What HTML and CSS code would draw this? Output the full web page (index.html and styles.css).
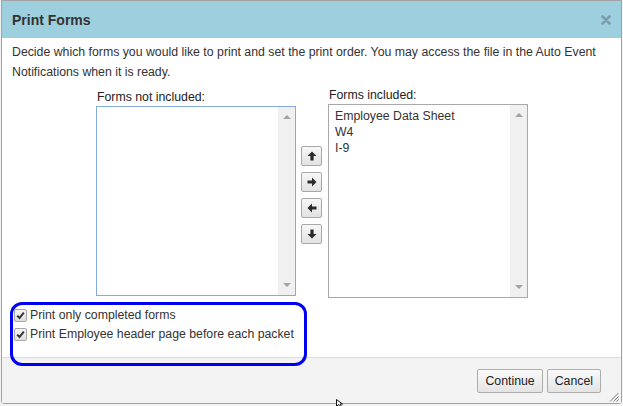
FILE: index.html
```html
<!DOCTYPE html>
<html>
<head>
<meta charset="utf-8">
<link rel="stylesheet" href="styles.css">
</head>
<body>
<div class="dialog">
  <div class="titlebar">
    <span class="title">Print Forms</span>
    <svg class="close" width="10" height="10" viewBox="0 0 10 10"><path d="M1.5 1.5 L8.5 8.5 M8.5 1.5 L1.5 8.5" stroke="#7a9cab" stroke-width="2.6" stroke-linecap="round"/></svg>
  </div>
  <div class="content">
    <p class="desc">Decide which forms you would like to print and set the print order. You may access the file in the Auto Event Notifications when it is ready.</p>
    <div class="lists">
      <div class="col col-left">
        <div class="label">Forms not included:</div>
        <div class="listbox focused">
          <div class="items"></div>
          <div class="scroll">
            <span class="tri up"></span>
            <span class="tri down"></span>
          </div>
        </div>
      </div>
      <div class="arrows">
        <button class="abtn"><svg width="10" height="10" viewBox="0 0 10 10"><path d="M5 0.5 L9.5 5 H6.6 V9.5 H3.4 V5 H0.5 Z" fill="#2b2b2b"/></svg></button>
        <button class="abtn"><svg width="10" height="10" viewBox="0 0 10 10"><path d="M9.5 5 L5 0.5 V3.4 H0.5 V6.6 H5 V9.5 Z" fill="#2b2b2b"/></svg></button>
        <button class="abtn"><svg width="10" height="10" viewBox="0 0 10 10"><path d="M0.5 5 L5 0.5 V3.4 H9.5 V6.6 H5 V9.5 Z" fill="#2b2b2b"/></svg></button>
        <button class="abtn"><svg width="10" height="10" viewBox="0 0 10 10"><path d="M5 9.5 L9.5 5 H6.6 V0.5 H3.4 V5 H0.5 Z" fill="#2b2b2b"/></svg></button>
      </div>
      <div class="col col-right">
        <div class="label">Forms included:</div>
        <div class="listbox tall">
          <div class="items">
            <div class="item">Employee Data Sheet</div>
            <div class="item">W4</div>
            <div class="item">I-9</div>
          </div>
          <div class="scroll">
            <span class="tri up"></span>
            <span class="tri down"></span>
          </div>
        </div>
      </div>
    </div>
    <div class="options">
      <label class="opt"><span class="cb"><svg width="9" height="9" viewBox="0 0 9 9"><path d="M1.2 4.6 L3.5 7 L7.8 1.6" fill="none" stroke="#333" stroke-width="2"/></svg></span>Print only completed forms</label>
      <label class="opt"><span class="cb"><svg width="9" height="9" viewBox="0 0 9 9"><path d="M1.2 4.6 L3.5 7 L7.8 1.6" fill="none" stroke="#333" stroke-width="2"/></svg></span>Print Employee header page before each packet</label>
    </div>
  </div>
  <div class="footer">
    <button class="btn">Continue</button>
    <button class="btn">Cancel</button>
    <svg class="grip" width="10" height="10" viewBox="0 0 10 10"><path d="M9.5 1 L1 9.5 M9.5 4.5 L4.5 9.5 M9.5 7.5 L7.5 9.5" stroke="#777" stroke-width="1"/></svg>
  </div>
</div>
<div class="annotation"></div>
<svg class="cursor" width="10" height="8" viewBox="0 0 10 8"><path d="M0.5 0.5 V7.5 L2.5 5.5 L4 7.5 H5.5 L4 5 H6.5 Z" fill="#fff" stroke="#111" stroke-width="1"/></svg>
</body>
</html>
```

FILE: styles.css
```css
html, body {
  margin: 0;
  padding: 0;
}
body {
  position: relative;
  width: 623px;
  height: 406px;
  overflow: hidden;
  background: #f2f2f2;
  font-family: Arial, "Liberation Sans", sans-serif;
  font-size: 12.3px;
  color: #333;
}
.dialog {
  margin-left: 1px;
  width: 621px;
  height: 404px;
  box-sizing: border-box;
  border: 1px solid #a3a3a3;
  border-radius: 0 0 3px 3px;
  background: #fff;
  display: flex;
  flex-direction: column;
}
.titlebar {
  height: 37px;
  flex: none;
  background: #9ecfdf;
  display: flex;
  align-items: center;
  justify-content: space-between;
  padding: 0 10px 0 10px;
}
.title {
  font-weight: bold;
  font-size: 14px;
  color: #333;
}
.close {
  display: block;
  margin-top: 1px;
}
.content {
  flex: 1;
  padding: 4px 10px 0 10px;
}
.desc {
  margin: 0;
  line-height: 20px;
  color: #333;
}
.lists {
  display: flex;
  align-items: flex-start;
  margin-left: 84px;
}
.col-left {
  margin-top: 8px;
}
.col-right {
  margin-top: 6px;
  margin-left: 6px;
}
.label {
  height: 16px;
  line-height: 15px;
  padding-left: 1px;
  color: #222;
}
.listbox {
  width: 200px;
  height: 190px;
  box-sizing: border-box;
  border: 1px solid #a9a9a9;
  display: flex;
  background: #fff;
}
.listbox.focused {
  border-color: #86a9e0;
}
.listbox.tall {
  height: 194px;
}
.items {
  flex: 1;
  padding: 3px 6px;
}
.item {
  line-height: 16px;
  color: #333;
}
.scroll {
  width: 17px;
  background: #f0f0f0;
  display: flex;
  flex-direction: column;
  justify-content: space-between;
  align-items: center;
  padding: 8px 0 8px 0;
}
.tri {
  width: 0;
  height: 0;
  border-left: 4px solid transparent;
  border-right: 4px solid transparent;
}
.tri.up {
  border-bottom: 4px solid #a3a3a3;
}
.tri.down {
  border-top: 4px solid #a3a3a3;
}
.arrows {
  display: flex;
  flex-direction: column;
  gap: 6px;
  margin-top: 64px;
  margin-left: 5px;
}
.abtn {
  width: 21px;
  height: 20px;
  padding: 0;
  box-sizing: border-box;
  border: 1px solid #a8a8a8;
  border-radius: 2px;
  background: linear-gradient(#f7f7f7, #e2e2e2);
  display: flex;
  align-items: center;
  justify-content: center;
}
.abtn svg {
  display: block;
}
.options {
  margin-top: 8px;
  margin-left: 2px;
}
.opt {
  display: flex;
  align-items: center;
  height: 19px;
  line-height: 19px;
  color: #333;
}
.cb {
  width: 13px;
  height: 13px;
  box-sizing: border-box;
  border: 1px solid #a6a6a6;
  border-radius: 2px;
  background: linear-gradient(#f4f4f4, #dedede);
  display: flex;
  align-items: center;
  justify-content: center;
  margin-right: 3px;
}
.cb svg {
  display: block;
}
.footer {
  flex: none;
  height: 46px;
  box-sizing: border-box;
  border-top: 1px solid #dcdcdc;
  background: #f3f3f3;
  display: flex;
  align-items: center;
  justify-content: flex-end;
  gap: 4px;
  padding-right: 20px;
  position: relative;
}
.btn {
  height: 24px;
  padding: 0 7px;
  border: 1px solid #adadad;
  border-radius: 2px;
  background: linear-gradient(#fafafa, #e4e4e4);
  font-family: Arial, "Liberation Sans", sans-serif;
  font-size: 12.3px;
  color: #222;
}
.grip {
  position: absolute;
  right: 2px;
  bottom: 1px;
}
.annotation {
  position: absolute;
  left: 10px;
  top: 302px;
  width: 297px;
  height: 64px;
  box-sizing: border-box;
  border: 3px solid #0000f2;
  border-radius: 12px;
}
.cursor {
  position: absolute;
  left: 336px;
  top: 399px;
}
```
